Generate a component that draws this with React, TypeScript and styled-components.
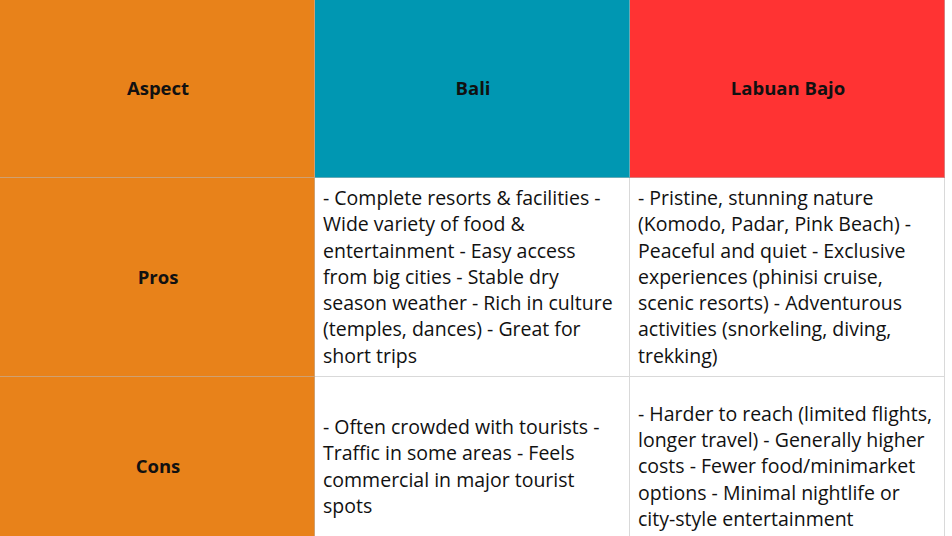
import * as React from "react";
import styled, { createGlobalStyle } from "styled-components";

const Global = createGlobalStyle`
    html, body {
        margin: 0;
        padding: 0;
        background: #ffffff;
    }
    body {
        font-family: "Open Sans", "Liberation Sans", sans-serif;
        color: #111111;
    }
`

const Table = styled.div`
    display: grid;
    grid-template-columns: 315px 315px 315px;
    grid-template-rows: 178px 199px 180px;
    width: 945px;
    height: 536px;
    overflow: hidden;
`

const Cell = styled.div<{ $bg: string; $head?: boolean }>`
    background: ${p => p.$bg};
    border-right: 1px solid rgba(185, 185, 185, 0.55);
    border-bottom: 1px solid rgba(185, 185, 185, 0.55);
    display: flex;
    align-items: center;
    justify-content: ${p => (p.$head ? "center" : "flex-start")};
    padding: 0 6px 0 8px;
    box-sizing: border-box;
    font-size: ${p => (p.$head ? "18.5px" : "19.5px")};
    font-weight: ${p => (p.$head ? 700 : 400)};
    line-height: 26.2px;
    text-align: ${p => (p.$head ? "center" : "left")};
    color: #111111;
`

const ORANGE = "#e8821a";
const TEAL = "#0097b2";
const RED = "#ff3333";
const WHITE = "#ffffff";

const rows = [
    {
        label: "Pros",
        bali: "- Complete resorts & facilities - Wide variety of food & entertainment - Easy access from big cities - Stable dry season weather - Rich in culture (temples, dances) - Great for short trips",
        bajo: "- Pristine, stunning nature (Komodo, Padar, Pink Beach) - Peaceful and quiet - Exclusive experiences (phinisi cruise, scenic resorts) - Adventurous activities (snorkeling, diving, trekking)",
    },
    {
        label: "Cons",
        bali: "- Often crowded with tourists - Traffic in some areas - Feels commercial in major tourist spots",
        bajo: "- Harder to reach (limited flights, longer travel) - Generally higher costs - Fewer food/minimarket options - Minimal nightlife or city-style entertainment",
    },
];

export default function App() {
    return (
        <>
            <Global />
            <Table>
                <Cell $bg={ORANGE} $head>Aspect</Cell>
                <Cell $bg={TEAL} $head>Bali</Cell>
                <Cell $bg={RED} $head>Labuan Bajo</Cell>
                {rows.map(r => (
                    <React.Fragment key={r.label}>
                        <Cell $bg={ORANGE} $head>{r.label}</Cell>
                        <Cell $bg={WHITE}>{r.bali}</Cell>
                        <Cell $bg={WHITE}>{r.bajo}</Cell>
                    </React.Fragment>
                ))}
            </Table>
        </>
    );
}
